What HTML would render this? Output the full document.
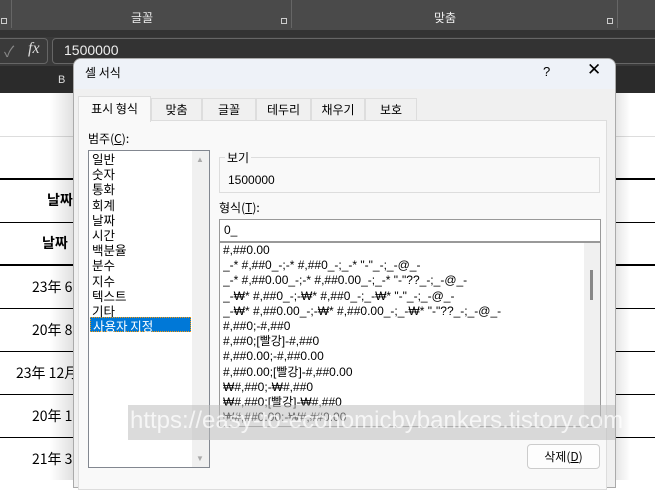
<!DOCTYPE html>
<html><head><meta charset="utf-8"><style>
*{margin:0;padding:0;box-sizing:border-box}
body{width:655px;height:480px;overflow:hidden;position:relative;background:#fff;font-family:"Liberation Sans","Noto Sans CJK KR",sans-serif;font-size:12px;color:#000}
.a{position:absolute}
.k{font-family:"Noto Sans CJK KR","Liberation Sans",sans-serif}
.hl{position:absolute;left:0;width:655px;background:#000}
.lst div{height:15.2px;line-height:15.2px;white-space:nowrap}
</style></head><body>
<div class="a" style="left:0;top:0;width:655px;height:30px;background:#4a4a4a"></div>
<div class="a" style="left:0;top:30px;width:655px;height:7px;background:#333"></div>
<div class="a" style="left:11px;top:0;width:1px;height:28px;background:#666"></div>
<div class="a" style="left:291px;top:0;width:1px;height:28px;background:#666"></div>
<div class="a" style="left:617px;top:0;width:1px;height:28px;background:#666"></div>
<div class="a k" style="left:131px;top:9px;color:#eee;font-size:12px">글꼴</div>
<div class="a k" style="left:434px;top:9px;color:#eee;font-size:12px">맞춤</div>
<div class="a" style="left:1px;top:18px;width:6px;height:6px;border:1px solid #ccc"></div>
<div class="a" style="left:281px;top:18px;width:6px;height:6px;border:1px solid #ccc"></div>
<div class="a" style="left:607px;top:18px;width:6px;height:6px;border:1px solid #ccc"></div>
<div class="a" style="left:0;top:37px;width:655px;height:29px;background:#3a3a3a"></div>
<div class="a" style="left:-4px;top:38px;width:52px;height:26px;border:1px solid #666;border-radius:4px"></div>
<div class="a" style="left:4px;top:41px;color:#888;font-size:15px">✓</div>
<div class="a" style="left:28px;top:40px;color:#ddd;font-family:'Liberation Serif',serif;font-style:italic;font-size:16px">fx</div>
<div class="a" style="left:52px;top:38px;width:610px;height:26px;border:1px solid #666;border-radius:4px;background:#333"></div>
<div class="a" style="left:64px;top:42px;color:#eee;font-size:14px">1500000</div>
<div class="a" style="left:0;top:66px;width:655px;height:27px;background:#2b2b2b"></div>
<div class="a" style="left:58px;top:74px;color:#ddd;font-size:11px">B</div>
<div class="a" style="left:0;top:136px;width:655px;height:1px;background:#ddd"></div>
<div class="hl" style="top:178px;height:2px"></div>
<div class="hl" style="top:222px;height:1px"></div>
<div class="hl" style="top:264px;height:2px"></div>
<div class="hl" style="top:308px;height:1px"></div>
<div class="hl" style="top:351px;height:1px"></div>
<div class="hl" style="top:394px;height:1px"></div>
<div class="hl" style="top:437px;height:1px"></div>
<div class="a k" style="left:47px;top:190px;font-size:14px;font-weight:bold">날짜</div>
<div class="a k" style="left:42px;top:233px;font-size:14px;font-weight:bold">날짜</div>
<div class="a k" style="left:32px;top:277px;font-size:14px">23年 6</div>
<div class="a k" style="left:32px;top:320px;font-size:14px">20年 8</div>
<div class="a k" style="left:16px;top:363px;font-size:14px">23年 12月</div>
<div class="a k" style="left:32px;top:406px;font-size:14px">20年 1</div>
<div class="a k" style="left:32px;top:449px;font-size:14px">21年 3</div>
<div class="a" style="left:50px;top:93px;width:23px;height:387px;background:linear-gradient(90deg,rgba(0,0,0,0),rgba(0,0,0,.12))"></div>
<div class="a" style="left:616px;top:93px;width:14px;height:387px;background:linear-gradient(90deg,rgba(0,0,0,.1),rgba(0,0,0,0))"></div>
<div class="a" style="left:73px;top:58px;width:543px;height:430px;background:#f0f0f0;border:1px solid #aaa;border-radius:8px 8px 0 0;overflow:hidden">
 <div style="height:30px;background:#eef2f8"></div>
</div>
<div class="a k" style="left:85px;top:64px;font-size:12px">셀 서식</div>
<div class="a" style="left:543px;top:64px;font-size:13px">?</div>
<div class="a" style="left:587px;top:60px;font-size:17px;font-weight:300">✕</div>
<div class="a" style="left:78px;top:120px;width:529px;height:370px;background:#f9f9f9;border:1px solid #ddd"></div>
<div class="a k" style="left:78px;top:96px;width:73px;height:26px;background:#f9f9f9;border:1px solid #ddd;border-bottom:none;text-align:center;line-height:24px">표시 형식</div>
<div class="a k" style="left:151px;top:98px;width:51px;height:22px;background:#f0f0f0;border:1px solid #ddd;border-bottom:none;text-align:center;line-height:22px">맞춤</div>
<div class="a k" style="left:202px;top:98px;width:54px;height:22px;background:#f0f0f0;border:1px solid #ddd;border-bottom:none;text-align:center;line-height:22px">글꼴</div>
<div class="a k" style="left:256px;top:98px;width:55px;height:22px;background:#f0f0f0;border:1px solid #ddd;border-bottom:none;text-align:center;line-height:22px">테두리</div>
<div class="a k" style="left:311px;top:98px;width:54px;height:22px;background:#f0f0f0;border:1px solid #ddd;border-bottom:none;text-align:center;line-height:22px">채우기</div>
<div class="a k" style="left:365px;top:98px;width:52px;height:22px;background:#f0f0f0;border:1px solid #ddd;border-bottom:none;text-align:center;line-height:22px">보호</div>
<div class="a k" style="left:88px;top:130px">범주(<u>C</u>):</div>
<div class="a" style="left:88px;top:150px;width:122px;height:318px;background:#fff;border:1px solid #828790"></div>
<div class="a" style="left:192px;top:151px;width:17px;height:316px;background:#f0f0f0"></div>
<div class="a" style="left:196px;top:155px;font-size:8px;color:#aaa">▲</div>
<div class="a" style="left:196px;top:454px;font-size:8px;color:#aaa">▼</div>
<div class="a k lst" style="left:92px;top:151px;font-size:12.5px;line-height:15px">
<div>일반</div><div>숫자</div><div>통화</div><div>회계</div><div>날짜</div><div>시간</div><div>백분율</div><div>분수</div><div>지수</div><div>텍스트</div><div>기타</div>
</div>
<div class="a k" style="left:90px;top:317px;width:101px;height:15px;background:#0078d7;color:#fff;font-size:12.5px;line-height:15px;padding-left:2px;border:1px dotted #f90">사용자 지정</div>
<div class="a" style="left:219px;top:157px;width:381px;height:36px;border:1px solid #ddd"></div>
<div class="a k" style="left:225px;top:149px;background:#f9f9f9;padding:0 2px">보기</div>
<div class="a" style="left:228px;top:173px">1500000</div>
<div class="a k" style="left:219px;top:199px">형식(<u>T</u>):</div>
<div class="a" style="left:219px;top:219px;width:382px;height:23px;background:#fff;border:1px solid #999;padding:3px 0 0 4px">0_</div>
<div class="a" style="left:219px;top:242px;width:382px;height:185px;background:#fff;border:1px solid #999"></div>
<div class="a" style="left:584px;top:243px;width:16px;height:183px;background:#f0f0f0"></div>
<div class="a" style="left:590px;top:270px;width:3px;height:30px;background:#888"></div>
<div class="a lst" style="left:223px;top:243px;font-size:12px;height:183px;overflow:hidden;font-family:'Liberation Sans','Noto Sans CJK KR',sans-serif">
<div>#,##0.00</div><div>_-* #,##0_-;-* #,##0_-;_-* "-"_-;_-@_-</div><div>_-* #,##0.00_-;-* #,##0.00_-;_-* "-"??_-;_-@_-</div><div>_-₩* #,##0_-;-₩* #,##0_-;_-₩* "-"_-;_-@_-</div><div>_-₩* #,##0.00_-;-₩* #,##0.00_-;_-₩* "-"??_-;_-@_-</div><div>#,##0;-#,##0</div><div>#,##0;[빨강]-#,##0</div><div>#,##0.00;-#,##0.00</div><div>#,##0.00;[빨강]-#,##0.00</div><div>₩#,##0;-₩#,##0</div><div>₩#,##0;[빨강]-₩#,##0</div><div>₩#,##0.00;-₩#,##0.00</div>
</div>
<div class="a" style="left:128px;top:405px;width:487px;height:35px;background:rgba(190,190,190,.55)"></div>
<div class="a" style="left:130px;top:407px;font-size:24px;color:rgba(255,255,255,.75);white-space:nowrap">https://easy-to-economicbybankers.tistory.com</div>
<div class="a k" style="left:527px;top:444px;width:73px;height:25px;background:#fdfdfd;border:1px solid #ccc;border-radius:4px;text-align:center;line-height:23px">삭제(<u>D</u>)</div>
</body></html>
